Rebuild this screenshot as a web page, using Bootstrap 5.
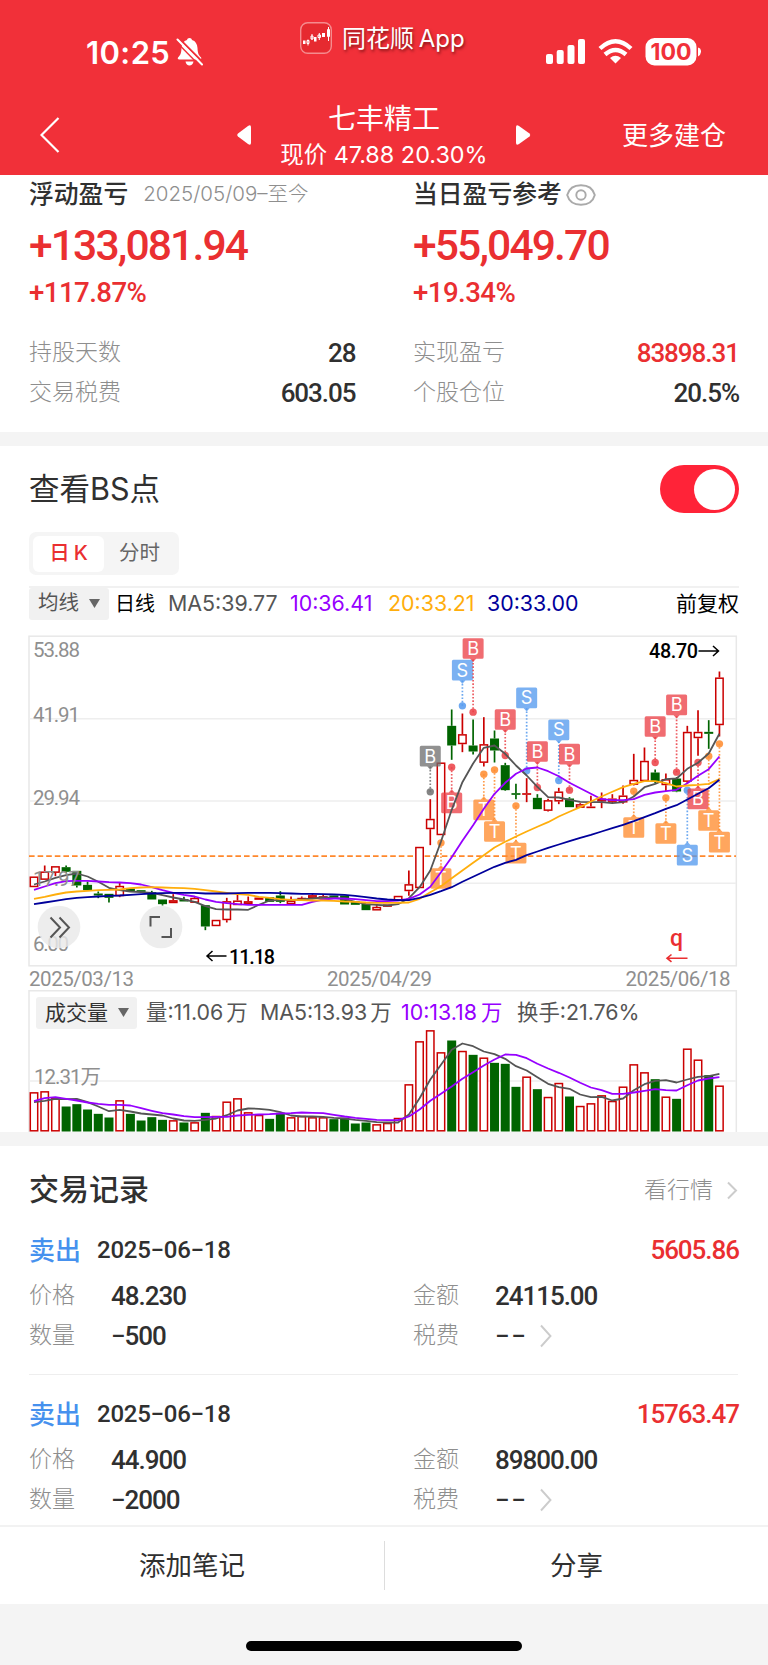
<!DOCTYPE html>
<html lang="zh-CN">
<head>
<meta charset="utf-8">
<meta name="viewport" content="width=device-width, initial-scale=1">
<title>七丰精工</title>
<link rel="stylesheet" href="https://cdn.jsdelivr.net/npm/bootstrap@5.3.0/dist/css/bootstrap.min.css">
<style>
:root{--up:#ea2f31;--ink:#303030;--mute:#8e8e8e;--band:#f4f4f4}
body{width:768px;height:1665px;overflow:hidden;background:#fff;color:var(--ink);
 font-family:Inter,"Noto Sans CJK SC",sans-serif;line-height:1;white-space:nowrap;font-size:23px}
svg{display:block;flex:none}
.din{font-family:Roboto,"Noto Sans CJK SC",sans-serif;font-weight:500;letter-spacing:-.04em}
.up{color:var(--up)}
.mute{color:var(--mute);font-weight:300}
.px29{padding-left:29px;padding-right:30px}
.hd{background:#f13039;height:174.5px;color:#fff}
.status{height:96px;padding:0 67px 0 86px}
.clock{font-size:31px;font-weight:600;width:90px;letter-spacing:.4px;margin-top:8px}
.appname{font-size:24px;text-shadow:1px 2px 3px rgba(60,0,0,.6);font-weight:400}
.navrow{height:78px;padding:0 42px 0 40px}
.midnav{width:294px}
.ttl{font-size:28px;height:40px;margin-top:-1px}
.sub{font-size:23.4px;font-weight:400;height:31px;padding-top:4px}
.band{background:var(--band);height:14.5px}
.sum{height:257px}
.colL{width:384px;padding-right:58.5px}
.colL>div,.colR>div{display:flex;align-items:center}
.h1r{height:40px;font-weight:500;font-size:24.8px}
.h1r .mute{font-size:20.5px;margin-left:15px}
.h2r{height:62px;font-size:42.6px;letter-spacing:-.044em}
.h3r{height:32px;font-size:27.6px;letter-spacing:-.02em}
.kv{height:40px;justify-content:space-between}
.kv .din,.val{font-size:26px}
.kv .din{margin-right:-1px}
.sw{width:79px;height:48px;border-radius:24px;background:#ff2338;padding:4px 4px;margin-right:-1px}
.sw i{width:41px;height:41px;border-radius:50%;background:#fff}
.tabs{width:150px;height:43px;background:#f5f5f5;border-radius:7px;padding:4px;font-size:20.5px}
.tabs>span{width:71px;height:36px;border-radius:6px}
.tabs .on{background:#fff;color:var(--up);font-weight:500}
.pick{background:#f1f1f1;border-radius:3px;height:32px}
.ma{height:32px;font-size:21.4px;color:#555}
.rec{height:143px}
.rec+.rec{height:149.5px;padding-top:21px}
.act{font-size:26.5px;height:79.5px;border-top:2px solid #f2f2f2}
.lab{width:82px}
.home{width:276px;height:10px;border-radius:5px;background:#000}
</style>
<script src="https://cdn.jsdelivr.net/npm/bootstrap@5.3.0/dist/js/bootstrap.bundle.min.js"></script>
</head>
<body>
<header class="hd">
 <div class="status d-flex align-items-center">
  <span class="clock">10:25</span>
  <svg width="27" height="30" viewBox="0 0 27 30" style="margin-top:8px"><path d="M13.500 1c1.400 0 2.200.8 2.500 2 3.500 1 5.300 4 5.500 8 .2 5 1 7 3.400 9.200.8.900.4 2.300-1 2.300H3.200c-1.500 0-1.800-1.500-1-2.300C4.500 18 5.300 16 5.500 11c.2-4 2-7 5.500-8 .3-1.200 1.100-2 2.500-2zM9.500 24.500h8c-.5 2.500-2 4-4 4s-3.500-1.500-4-4z" fill="#fff"/><path d="M3 1.500l24 24" stroke="#f13039" stroke-width="2.200"/><path d="M1.500 2.500l24.500 25" stroke="#fff" stroke-width="2" stroke-linecap="round"/><path d="M0 4.500l24 24.500" stroke="#f13039" stroke-width="1.400"/></svg>
  <svg width="32" height="32" viewBox="0 0 32 32" style="margin:-21px 10px 0 97px"><rect x=".7" y=".7" width="30.600" height="30.600" rx="7" fill="#e62a30" stroke="#f58b8e" stroke-width="1.400"/><g fill="#fff"><path d="M3 18.500h2.500v3.500H3zM14 15h2.500v4.500H14zM22 11h3v4h-3z"/></g><g fill="none" stroke="#fff"><path d="M7 18.500h2v3H7zM8 17.500v6M11 14h2v3h-2zM12 12v6M18 13h2.500v2.500H18zM19.300 11v7M27.500 7.500h2v7h-2zM28.500 5v14"/></g></svg>
  <span class="appname" style="margin-top:-19px">同花顺 <span style="margin-left:-2px">App</span></span>
  <svg class="ms-auto" width="155" height="28" viewBox="0 0 155 28" style="margin-top:7px"><g fill="#fff"><rect y="16" width="7" height="10" rx="2"/><rect x="10.700" y="12" width="7" height="14" rx="2"/><rect x="21.500" y="7" width="7" height="19" rx="2"/><rect x="32" y="1" width="7" height="25" rx="2"/>
   <path d="M69.500 25.500l-5.500-5.500q5.500-4.500 11 0z"/><rect x="99.500" y="0" width="51" height="27.500" rx="9"/><path d="M152 9.500q3.500 1 3 4.500t-3 4.500z"/></g><g fill="none" stroke="#fff" stroke-width="4.400"><path d="M59 16.500q10.500-9 21 0"/><path d="M54 10.500q15.500-14.500 31 0"/></g><text x="125" y="22" text-anchor="middle" font-family="Inter" font-weight="700" font-size="23" fill="#f13039" textLength="41" lengthAdjust="spacingAndGlyphs">100</text></svg>
 </div>
 <div class="navrow d-flex align-items-center justify-content-between">
  <svg width="20" height="38" viewBox="0 0 20 38"><path d="M18.500 2L1.500 19 18.500 36" fill="none" stroke="#fff" stroke-width="2.200"/></svg>
  <div class="midnav d-flex align-items-center justify-content-between" style="margin-left:87px">
   <svg width="14" height="22" viewBox="0 0 14 22"><path d="M14 3.500v15q0 3.500-3 1.500L1 12.500q-1.500-1.500 0-3L11 2q3-2 3 1.500z" fill="#fff"/></svg>
   <div class="text-center"><div class="ttl d-flex align-items-center justify-content-center">七丰精工</div><div class="sub">现价 47.88 20.30%</div></div>
   <svg width="15" height="22" viewBox="0 0 15 22"><path d="M0 3.500v15q0 3.500 3 1.500l10.500-7.500q1.500-1.500 0-3L3 2Q0 0 0 3.500z" fill="#fff"/></svg>
  </div>
  <span style="font-size:26px;margin-top:2px">更多建仓</span>
 </div>
</header>

<section class="sum px29 d-flex">
 <div class="colL">
  <div class="h1r">浮动盈亏<span class="mute">2025/05/09–至今</span></div>
  <div class="h2r din up">+133,081.94</div>
  <div class="h3r din up">+117.87%</div>
  <div class="kv" style="margin-top:24px"><span class="mute">持股天数</span><span class="din">28</span></div>
  <div class="kv"><span class="mute">交易税费</span><span class="din">603.05</span></div>
 </div>
 <div class="colR flex-fill">
  <div class="h1r">当日盈亏参考<svg width="30" height="22" viewBox="0 0 30 22" style="margin-left:4px"><path d="M1.200 11C3 4.500 8.500 1.200 15 1.200S27 4.500 28.800 11C27 17.500 21.500 20.800 15 20.800S3 17.500 1.200 11z" fill="none" stroke="#aaa" stroke-width="1.900"/><ellipse cx="15" cy="11" rx="4.700" ry="4.800" fill="none" stroke="#aaa" stroke-width="1.900"/></svg></div>
  <div class="h2r din up">+55,049.70</div>
  <div class="h3r din up">+19.34%</div>
  <div class="kv" style="margin-top:24px"><span class="mute">实现盈亏</span><span class="din up">83898.31</span></div>
  <div class="kv"><span class="mute">个股仓位</span><span class="din">20.5%</span></div>
 </div>
</section>
<div class="band"></div>

<section>
 <div class="px29 d-flex align-items-center justify-content-between" style="height:86px">
  <span style="font-size:30.500px">查看BS点</span>
  <div class="sw d-flex justify-content-end"><i></i></div>
 </div>
 <div class="px29">
  <div class="tabs d-flex align-items-center"><span class="on d-flex align-items-center justify-content-center">日<span class="ms-1">K</span></span><span class="d-flex align-items-center justify-content-center" style="color:#666">分时</span></div>
  <div class="ma d-flex align-items-center" style="margin-top:10.500px;border-top:2px solid #f1f1f1;height:34px;margin-right:-1px">
   <span class="pick d-flex align-items-center" style="width:80px;padding-left:9px;font-size:20.500px">均线<svg width="11" height="9" viewBox="0 0 11 9" style="margin-left:10px"><path d="M0 0h11L5.500 9z" fill="#666"/></svg></span>
   <span class="text-black" style="width:53px;margin-left:6px;font-size:20px">日线</span>
   <span style="width:122px">MA5:39.77</span><span style="width:98px;color:#9600ff">10:36.41</span><span style="width:99px;color:#ffae0c">20:33.21</span><span style="color:#00009b">30:33.00</span>
   <span class="text-black ms-auto" style="font-size:21px">前复权</span>
  </div>
 </div>
 <svg id="kline" width="768" height="370" viewBox="0 619.500 768 370"></svg>
 <div style="height:142px" class="position-relative">
  <svg id="vol" width="768" height="142" viewBox="0 989.500 768 142"></svg>
  <div class="ma d-flex align-items-center position-absolute top-0 start-0" style="margin:7px 0 0 36px">
   <span class="pick d-flex align-items-center" style="width:101px;padding-left:9px;color:#333;font-size:21px">成交量<svg width="11" height="9" viewBox="0 0 11 9" style="margin-left:10px"><path d="M0 0h11L5.500 9z" fill="#666"/></svg></span>
   <span style="width:114px;margin-left:9px">量:11.06<span style="margin-left:3px">万</span></span><span style="width:141px">MA5:13.93<span style="margin-left:3px">万</span></span><span style="width:116px;color:#9600ff">10:13.18<span class="ms-1">万</span></span><span>换手:21.76%</span>
  </div>
 </div>
</section>
<div class="band"></div>

<section>
 <div class="px29 d-flex align-items-center justify-content-between" style="height:86px">
  <span style="font-size:30px;font-weight:500">交易记录</span>
  <span class="mute d-flex align-items-center" style="margin-top:2px">看行情<svg width="12" height="19" viewBox="0 0 12 19" style="margin-left:13px"><path d="M2 1.500l8 8-8 8" fill="none" stroke="#ccc" stroke-width="2"/></svg></span>
 </div>
 <div id="records" class="px29"></div>
</section>
<footer>
 <div class="act d-flex align-items-center text-center">
  <span style="width:384px">添加笔记</span><span style="width:1px;height:49px;background:#ddd"></span><span class="flex-fill">分享</span>
 </div>
 <div style="background:#f4f4f4;height:62px;padding-top:37px"><div class="home mx-auto"></div></div>
</footer>
<script>
const STEP=10.71, X0=34, UP='#cb0000', DN='#006400';
const cx=i=>X0+i*STEP, yk=v=>625+v/3, yv=v=>960+v/3;
const path=(a,f,c)=>`<polyline points="${a.map((v,i)=>cx(i).toFixed(1)+','+f(v).toFixed(1)).join(' ')}" fill="none" stroke="${c}" stroke-width="1.8" stroke-linejoin="round"/>`;
const box=(i,t,b,up)=>up?`<rect x="${cx(i)-3.7}" y="${t+.7}" width="7.400" height="${Math.max(b-t-1.4,.6)}" fill="#fff" stroke="${UP}" stroke-width="1.5"/>`:`<rect x="${cx(i)-4.5}" y="${t}" width="9" height="${b-t}" fill="${DN}"/>`;
// up?, high, body top, body bottom, low
const K=[[1,753,753,785,785],[1,720,738,763,763],[1,722,722,742,752],[0,720,725,739,742],[0,736,736,780,786],[0,768,778,794,794],[0,798,804,810,818],[0,805,805,817,831],[1,770,781,812,815],[0,789,789,797,797],[0,794,794,799,799],[0,796,800,822,822],[0,822,822,836,840],[1,806,824,833,833],[0,814,821,828,828],[1,813,817,832,832],[0,839,839,903,914],[1,883,883,902,902],[1,817,827,884,891],[1,808,825,839,839],[1,813,827,836,836],[1,816,816,823,823],[0,815,815,829,829],[0,797,810,829,833],[1,813,825,836,836],[1,813,817,825,825],[1,805,809,818,821],[1,808,812,819,819],[0,810,810,817,817],[0,810,810,837,837],[0,828,828,838,838],[0,835,835,854,854],[1,839,844,855,855],[1,837,837,844,844],[1,811,811,825,825],[1,735,776,797,811],[1,664,664,788,788],[1,521,580,611,659],[1,411,411,629,629],[0,252,301,360,403],[1,264,326,356,380],[0,282,360,378,387],[1,275,356,412,423],[0,315,339,375,411],[0,412,419,494,496],[0,475,503,508,521],[1,458,503,508,530],[0,506,517,551,551],[1,520,524,556,558],[1,487,498,528,536],[0,515,519,545,545],[1,533,536,547,547],[1,511,543,548,548],[1,501,519,528,548],[1,506,519,529,533],[1,480,510,531,535],[1,385,463,478,480],[1,366,406,467,468],[0,432,441,468,473],[1,444,461,479,497],[0,455,459,498,500],[1,301,319,469,473],[1,254,319,338,391],[0,284,319,325,370],[1,138,156,299,333]];
const M5=[777,768,757,749,744,753,769,787,794,798,800,802,809,816,822,829,842,851,852,852,853,838,825,823,823,822,819,816,817,821,829,836,838,840,836,818,785,735,648,553,470,414,367,360,385,420,450,484,515,516,523,529,530,530,533,530,513,485,475,461,459,430,412,384,325];
const M10=[793,783,773,767,766,766,768,770,771,773,777,785,794,802,808,813,822,829,833,836,838,838,838,838,838,838,829,822,819,819,821,824,827,827,825,820,807,784,740,695,646,599,550,505,472,445,429,426,437,452,472,488,505,521,524,524,521,508,501,497,493,473,451,431,393];
const M20=[820,814,807,801,798,796,794,793,792,788,786,785,786,787,788,790,794,798,802,806,808,814,817,821,823,824,825,825,826,828,829,831,832,832,832,831,820,800,782,758,735,712,689,666,649,633,618,604,590,573,559,545,528,513,499,485,475,467,467,473,483,480,478,475,461];
const M30=[836,831,826,821,817,815,813,811,810,808,806,804,803,802,802,802,804,804,804,803,802,802,802,803,804,805,805,806,807,808,811,815,819,822,824,824,817,808,797,785,769,754,739,724,712,703,689,678,667,657,647,637,628,618,608,598,587,575,563,550,539,522,505,488,463];
// kind, candle index, badge top, dot
const T=[['B',37,361,499,'#6e6e6e'],['S',40,103,241],['B',41,38,260],['B',39,501,425],['T',38,728,652],['T',42,522,446],['T',43,587,433],['T',45,652,541],['B',44,251,390],['S',46,186,436],['B',47,347,486],['S',49,282,465],['B',50,355,494],['T',56,575,497],['B',58,272,411],['T',59,593,517],['B',60,207,440],['S',61,658,494],['B',62,489,411],['T',63,554,392],['T',64,619,355]];
const COL={B:'#eb3e44',S:'#5299ee',T:'#ff8a2b'};
const line=(x1,y1,x2,y2,c='#eee',w=1.5,e='')=>`<line x1="${x1}" y1="${y1}" x2="${x2}" y2="${y2}" stroke="${c}" stroke-width="${w}" ${e}/>`;
const txt=(x,y,s,w,c='#8f8f8f',sz=20.5,wt=400)=>`<text x="${x}" y="${y}" font-size="${sz}" font-weight="${wt}" fill="${c}" font-family="Roboto,'Noto Sans CJK SC',sans-serif" ${w?`textLength="${w}"`:''}>${s}</text>`;
let s=`<rect x="29" y="635.700" width="707.300" height="329.600" fill="none" stroke="#e8e8e8" stroke-width="1.5"/>`;
[718.3,800.5,882.8].forEach(y=>s+=line(29,y,736,y));
s+=line(29,855.7,736,855.7,'#ff882c',1.7,'stroke-dasharray="5.600 3"');
K.forEach(([u,h,t,b,l],i)=>{const c=u?UP:DN;if(h<t)s+=line(cx(i),yk(h),cx(i),yk(t),c,1.7);if(l>b)s+=line(cx(i),yk(b),cx(i),yk(l),c,1.7);s+=b-t<8?`<rect x="${cx(i)-4.5}" y="${yk(t)}" width="9" height="${(b-t)/3}" fill="${c}"/>`:box(i,yk(t),yk(b),u)});
T.forEach(([k,i,t,d,c])=>{c=c||COL[k];const x=cx(i),y=yk(t),dy=yk(d),up=t<d,e=up?y+20.7:y;
 s+=line(x,dy,x,e,c,1.7,'stroke-dasharray="1.600 1.800" opacity=".85"')+`<circle cx="${x}" cy="${dy}" r="3.700" fill="${c}" opacity=".85"/><path d="M${x-10.5} ${y+1.5}q0-1.500 1.500-1.500h18q1.500 0 1.500 1.500v17.700q0 1.500-1.500 1.500h-18q-1.500 0-1.500-1.500z M${x-3} ${e}l3 ${up?3.2:-3.2} 3 ${up?-3.2:3.2}z" fill="${c}" opacity=".76"/><text x="${x}" y="${y+16.8}" text-anchor="middle" font-family="Inter" font-size="18.200" fill="#fff">${k}</text>`});
s+=path(M5,yk,'#555')+path(M10,yk,'#9600ff')+path(M20,yk,'#ffae0c')+path(M30,yk,'#00009b');
[['53.88',656.3],['41.91',721],['29.94',804],['17.97',885.8],['6.00',950.6]].forEach(([a,y])=>s+=txt(33,y,a,a.length>4?47:36));
s+=`<g fill="#e9e9e9" fill-opacity=".82"><circle cx="59" cy="926.500" r="21.300"/><circle cx="161" cy="926.500" r="21.300"/></g><g fill="none" stroke="#555" stroke-width="2"><path d="M50.500 917l9.500 10-9.500 10M59.500 917l9.500 10-9.500 10"/><path d="M150.500 926v-9.500h9.500M171 927.500v9h-9.500"/></g>`;
s+=txt(649,657.7,'48.70',49,'#000',19.8,500)+txt(229,963,'11.18',46,'#000',19.8,500);
s+=`<g fill="none" stroke="#000" stroke-width="1.500"><path d="M698.500 650.500h20M713 645.500l5.500 5-5.500 5M226.500 955.500h-19.500M212.500 950.500l-5.500 5 5.500 5"/></g><path d="M687.500 957.700H667M671.500 954l-4.500 3.700 4.500 3.700" fill="none" stroke="#ea2f31" stroke-width="1.600"/>`+txt(670,945.5,'q',0,'#ea2f31',23,500);
s+=txt(29,985.8,'2025/03/13',105)+txt(327,985.8,'2025/04/29',105)+txt(625.5,985.8,'2025/06/18',105);
document.getElementById('kline').innerHTML=s;
const V=[395,392,412,438,431,447,460,471,419,460,480,470,478,479,486,485,457,466,423,413,455,463,475,457,470,466,470,470,476,472,489,486,491,487,472,371,242,209,275,240,271,283,291,307,310,379,348,386,409,367,408,436,428,404,421,378,311,335,356,408,415,264,297,344,375];
const VG=new Set([3,4,5,6,7,9,10,11,12,14,16,22,23,28,29,30,31,39,41,43,44,45,47,50,58,60,63]);
const V5=[425,421,415,416,415,425,438,452,448,453,459,462,465,474,480,481,478,474,464,450,444,445,448,455,465,468,468,469,472,474,478,481,485,486,486,462,413,357,313,268,249,257,273,281,295,317,330,350,370,380,385,402,410,409,420,414,389,371,361,359,366,357,349,347,340];
const V10=[422,413,410,415,420,426,430,433,433,435,443,451,458,462,467,470,470,469,469,465,463,462,461,459,458,456,457,458,463,468,472,475,478,479,479,468,447,421,400,378,355,335,315,297,282,283,293,310,324,337,351,367,381,389,400,400,396,391,386,389,390,374,360,354,350];
s=`<path d="M29 1131.500V990.200H736.300V1131.500" fill="none" stroke="#e8e8e8" stroke-width="1.500"/>`+line(29,1080.4,736,1080.4);
V.forEach((v,i)=>s+=box(i,yv(v),1131,!VG.has(i)));
s+=path(V5,yv,'#555')+path(V10,yv,'#9600ff')+txt(34,1083,'12.31万',67);
document.getElementById('vol').innerHTML=s;
const chev='<svg width="14" height="24" viewBox="0 0 14 24" style="margin-left:12px"><path d="M2 1.500l9.500 10.500L2 22.500" fill="none" stroke="#ccc" stroke-width="1.900"/></svg>';
document.getElementById('records').innerHTML=[['5605.86','48.230','24115.00','500'],['15763.47','44.900','89800.00','2000']].map(([p,a,b,n],i)=>`
<div class="rec">
 <div class="d-flex align-items-center" style="height:36px"><span style="font-size:26px;font-weight:500;color:#4691ee;width:68px;padding-top:2px">卖出</span><span class="din" style="font-size:24px;letter-spacing:-.25px">2025−06−18</span><span class="din up val ms-auto" style="margin-right:-1px">${p}</span></div>
 <div class="d-flex align-items-center" style="height:47.500px;padding-top:7.500px"><span class="mute lab">价格</span><span class="din val" style="width:302px">${a}</span><span class="mute lab">金额</span><span class="din val">${b}</span></div>
 <div class="d-flex align-items-center" style="height:40px"><span class="mute lab">数量</span><span class="din val" style="width:302px">−${n}</span><span class="mute lab">税费</span><span class="din val" style="letter-spacing:1.500px">−−</span>${chev}</div>
 ${i?'':'<div style="height:1px;background:#eee;margin-top:18.500px"></div>'}
</div>`).join('');
</script>
</body>
</html>
